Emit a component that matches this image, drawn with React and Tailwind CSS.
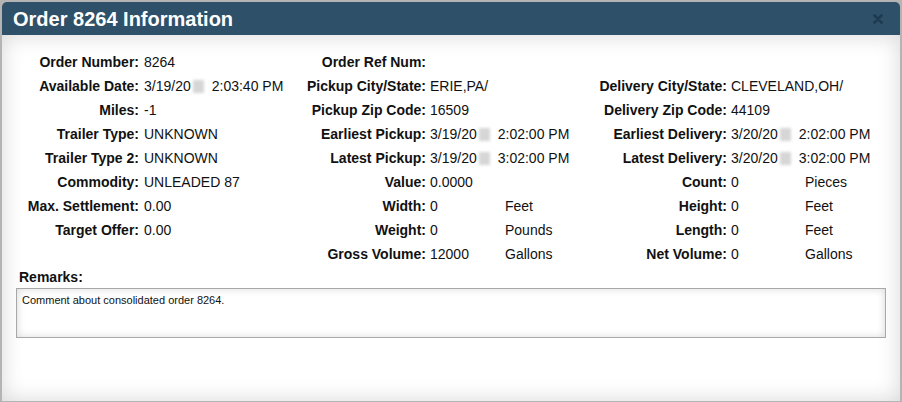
const rows = [
  [
    ['Order Number:', '8264'],
    ['Order Ref Num:', '', ''],
    null,
  ],
  [
    ['Available Date:', { date: '3/19/20', time: '2:03:40 PM' }],
    ['Pickup City/State:', 'ERIE,PA/', ''],
    ['Delivery City/State:', 'CLEVELAND,OH/', ''],
  ],
  [
    ['Miles:', '-1'],
    ['Pickup Zip Code:', '16509', ''],
    ['Delivery Zip Code:', '44109', ''],
  ],
  [
    ['Trailer Type:', 'UNKNOWN'],
    ['Earliest Pickup:', { date: '3/19/20', time: '2:02:00 PM' }, ''],
    ['Earliest Delivery:', { date: '3/20/20', time: '2:02:00 PM' }, ''],
  ],
  [
    ['Trailer Type 2:', 'UNKNOWN'],
    ['Latest Pickup:', { date: '3/19/20', time: '3:02:00 PM' }, ''],
    ['Latest Delivery:', { date: '3/20/20', time: '3:02:00 PM' }, ''],
  ],
  [
    ['Commodity:', 'UNLEADED 87'],
    ['Value:', '0.0000', ''],
    ['Count:', '0', 'Pieces'],
  ],
  [
    ['Max. Settlement:', '0.00'],
    ['Width:', '0', 'Feet'],
    ['Height:', '0', 'Feet'],
  ],
  [
    ['Target Offer:', '0.00'],
    ['Weight:', '0', 'Pounds'],
    ['Length:', '0', 'Feet'],
  ],
  [
    null,
    ['Gross Volume:', '12000', 'Gallons'],
    ['Net Volume:', '0', 'Gallons'],
  ],
];

function Value({ v }) {
  if (v && typeof v === 'object') {
    return (
      <span className="whitespace-nowrap">
        {v.date}
        <span className="mx-[2px] inline-block h-[13px] w-[11px] translate-y-[2px] bg-[#d6d6d6] blur-[1.5px]" />
        <span className="ml-[6px]">{v.time}</span>
      </span>
    );
  }
  return <span className="whitespace-nowrap">{v}</span>;
}

function CloseIcon() {
  return (
    <svg width="10" height="10" viewBox="0 0 10 10">
      <path d="M1.5 1.5 L8.5 8.5 M8.5 1.5 L1.5 8.5" stroke="#1e3a4f" strokeWidth="2.6" strokeLinecap="round" />
    </svg>
  );
}

export default function App() {
  return (
    <div
      className="h-[402px] w-[902px] bg-[#b4b4b4] px-[2px] pt-[2px] pb-[1px] text-[14px] text-[#111]"
      style={{ fontFamily: '"Liberation Sans", Arial, sans-serif' }}
    >
      <div className="flex h-full flex-col overflow-hidden rounded-t-[5px]">
        <div className="flex h-[33px] shrink-0 items-center justify-between bg-[#2e5068] pr-[17px] pl-[11px]">
          <h2 className="text-[20px] font-bold text-white">Order 8264 Information</h2>
          <CloseIcon />
        </div>
        <div className="flex-1 bg-white pt-[15px] shadow-[inset_0_0_22px_rgba(0,0,0,0.16)]">
          <div className="grid grid-cols-[142px_156px_130px_75px_87px_139px_74px_1fr]">
            {rows.map((row, i) => (
              <div key={i} className="contents">
                <div className="flex h-[24px] items-center justify-end pr-[5px] font-bold whitespace-nowrap">
                  {row[0] && row[0][0]}
                </div>
                <div className="flex h-[24px] items-center">{row[0] && <Value v={row[0][1]} />}</div>
                <div className="flex h-[24px] items-center justify-end pr-[4px] font-bold whitespace-nowrap">
                  {row[1] && row[1][0]}
                </div>
                <div className="flex h-[24px] items-center">{row[1] && <Value v={row[1][1]} />}</div>
                <div className="flex h-[24px] items-center">{row[1] && row[1][2]}</div>
                <div className="flex h-[24px] items-center justify-end pr-[4px] font-bold whitespace-nowrap">
                  {row[2] && row[2][0]}
                </div>
                <div className="flex h-[24px] items-center">{row[2] && <Value v={row[2][1]} />}</div>
                <div className="flex h-[24px] items-center">{row[2] && row[2][2]}</div>
              </div>
            ))}
          </div>
          <div className="px-[14px]">
            <div className="mt-[3px] h-[16px] pl-[3px] leading-[16px] font-bold">Remarks:</div>
            <div className="mt-[3px] h-[50px] border border-[#a8a8a8] px-[5px] pt-[3px] text-[11px] shadow-[inset_0_0_9px_rgba(0,0,0,0.14)]">
              Comment about consolidated order 8264.
            </div>
          </div>
        </div>
      </div>
    </div>
  );
}
